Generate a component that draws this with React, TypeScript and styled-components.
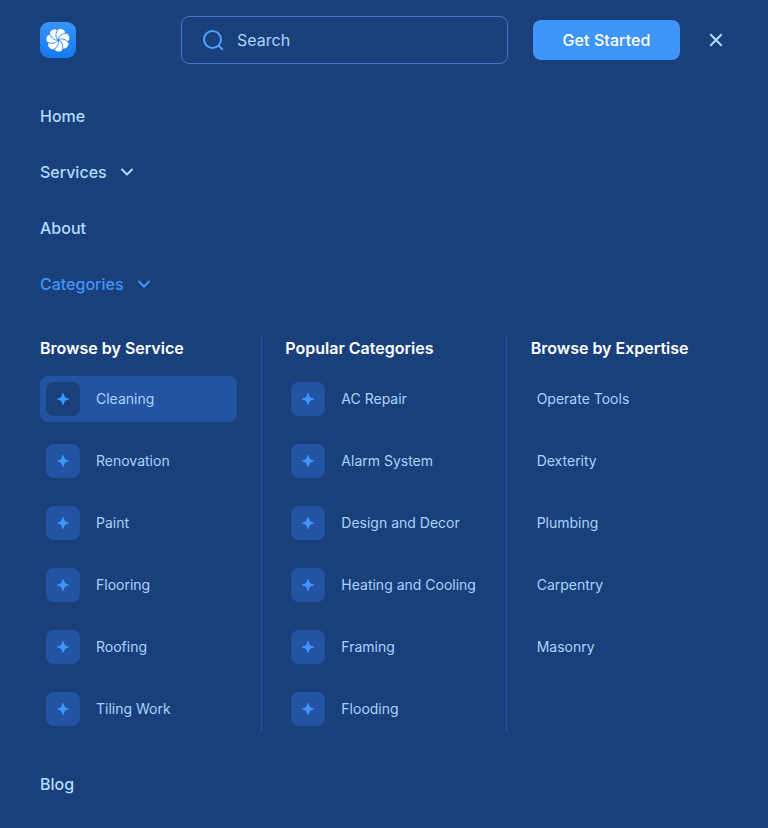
import React from "react";
import styled, { createGlobalStyle } from "styled-components";

const GlobalStyle = createGlobalStyle`
  *, *::before, *::after { box-sizing: border-box; }
  body { margin: 0; background: #1a407c; font-family: Inter, "Liberation Sans", sans-serif; }
  button { font-family: inherit; }
`;

const Page = styled.div`
  min-height: 828px;
  background: #1a407c;
  color: #b2ddff;
`;

const Header = styled.header`
  display: flex;
  align-items: center;
  height: 80px;
  padding: 0 40px;
`;

const Logo = styled.svg`
  width: 36px;
  height: 36px;
  flex: none;
`;

const SearchBox = styled.label`
  display: flex;
  align-items: center;
  gap: 12px;
  width: 327px;
  height: 48px;
  margin-left: 105px;
  padding: 0 19px;
  border: 1px solid #3a76d2;
  border-radius: 8px;
`;

const SearchIcon = styled.svg`
  width: 24px;
  height: 24px;
  flex: none;
`;

const SearchInput = styled.input`
  flex: 1;
  min-width: 0;
  padding: 0;
  border: 0;
  outline: 0;
  background: transparent;
  color: #b2ddff;
  font: 400 16px/24px Inter, sans-serif;

  &::placeholder { color: #a9d3fb; opacity: 1; }
`;

const PrimaryButton = styled.button`
  width: 147px;
  height: 40px;
  margin-left: 25px;
  padding: 0;
  border: 0;
  border-radius: 8px;
  background: #4095f9;
  color: #fff;
  font-size: 16px;
  font-weight: 500;
  letter-spacing: 0.08px;
`;

const CloseButton = styled.button`
  display: grid;
  place-items: center;
  width: 24px;
  height: 24px;
  margin-left: 24px;
  padding: 0;
  border: 0;
  background: transparent;
  color: #b2ddff;
`;

const Nav = styled.nav`
  display: flex;
  flex-direction: column;
  gap: 32px;
  padding: 24px 40px 32px;
`;

const NavLink = styled.a<{ $active?: boolean }>`
  display: flex;
  align-items: center;
  gap: 11px;
  height: 24px;
  color: ${({ $active }) => ($active ? "#4095f9" : "#b2ddff")};
  font-size: 16px;
  font-weight: 500;
  line-height: 24px;
`;

const MegaMenu = styled.div`
  display: flex;
  margin: 8px 0;
`;

const Column = styled.section`
  flex: 1 1 0;
  min-width: 0;
`;

const Divider = styled.div`
  width: 1px;
  margin: 0 23.4px 0 23.6px;
  background: #2353a3;
`;

const ColumnTitle = styled.h2`
  margin: 0 0 16px;
  color: #fff;
  font-size: 16px;
  font-weight: 600;
  line-height: 24px;
  white-space: nowrap;
`;

const List = styled.div`
  display: flex;
  flex-direction: column;
  gap: 16px;
`;

const Item = styled.a<{ $selected?: boolean }>`
  display: flex;
  align-items: center;
  gap: 16px;
  height: 46px;
  padding: 6px;
  border-radius: 8px;
  background: ${({ $selected }) => ($selected ? "#2353a3" : "transparent")};
  color: #a9d3fb;
  font-size: 14px;
  line-height: 20px;
  white-space: nowrap;
`;

const IconTile = styled.span<{ $selected?: boolean }>`
  display: grid;
  place-items: center;
  width: 34px;
  height: 34px;
  flex: none;
  border-radius: 8px;
  background: ${({ $selected }) => ($selected ? "#1a407c" : "#2353a3")};
`;

const Chevron = () => (
  <svg width="18" height="18" viewBox="0 0 18 18" fill="none" stroke="currentColor" strokeWidth="2" strokeLinecap="round" strokeLinejoin="round">
    <path d="M4 6.5l5 5 5-5" />
  </svg>
);

const Spark = () => (
  <svg width="14" height="14" viewBox="0 0 14 14" fill="#4095f9">
    <path d="M7 .8C7.6 .8 8 3.8 9 5C10.2 6 13.2 6.4 13.2 7C13.2 7.6 10.2 8 9 9C8 10.2 7.6 13.2 7 13.2C6.4 13.2 6 10.2 5 9C3.8 8 .8 7.6 .8 7C.8 6.4 3.8 6 5 5C6 3.8 6.4 .8 7 .8Z" />
  </svg>
);

const PETAL_STEP = 360 / 7;
const petals = Array.from({ length: 7 }, (_, index) => index * PETAL_STEP - 4);

const BrandLogo = () => (
  <Logo viewBox="0 0 36 36" role="img" aria-label="Logo">
    <defs>
      <linearGradient id="logoFill" x1="0" y1="0" x2="0" y2="1">
        <stop stopColor="#3795fb" />
        <stop offset="1" stopColor="#1479f1" />
      </linearGradient>
    </defs>
    <rect width="36" height="36" rx="9" fill="url(#logoFill)" />
    <circle cx="18" cy="18" r="7.5" fill="#fff" />
    {petals.map((angle) => (
      <circle
        key={angle}
        transform={`rotate(${angle + PETAL_STEP / 2} 18 18)`}
        cx="18"
        cy="10.5"
        r="4.1"
        fill="#fff"
      />
    ))}
    {petals.map((angle) => (
      <path
        key={angle}
        transform={`rotate(${angle} 18 18)`}
        d="M18 18C15.8 15.6 15.6 11.8 18 8.3"
        fill="none"
        stroke="#298bf8"
        strokeWidth=".9"
      />
    ))}
  </Logo>
);

const columns = [
  { title: "Browse by Service", icons: true, items: ["Cleaning", "Renovation", "Paint", "Flooring", "Roofing", "Tiling Work"] },
  { title: "Popular Categories", icons: true, items: ["AC Repair", "Alarm System", "Design and Decor", "Heating and Cooling", "Framing", "Flooding"] },
  { title: "Browse by Expertise", icons: false, items: ["Operate Tools", "Dexterity", "Plumbing", "Carpentry", "Masonry"] },
];

export default function App() {
  return (
    <Page>
      <GlobalStyle />
      <Header>
        <BrandLogo />
        <SearchBox>
          <SearchIcon viewBox="0 0 24 24" fill="none" stroke="#4f9ff8" strokeWidth="2" strokeLinecap="round">
            <circle cx="11.5" cy="11.5" r="8.5" />
            <path d="M17.8 17.8l3.4 3.4" />
          </SearchIcon>
          <SearchInput placeholder="Search" aria-label="Search" />
        </SearchBox>
        <PrimaryButton>Get Started</PrimaryButton>
        <CloseButton aria-label="Close menu">
          <svg width="24" height="24" viewBox="0 0 24 24" stroke="currentColor" strokeWidth="2" strokeLinecap="round">
            <path d="M6.8 6.8l10.4 10.4M17.2 6.8L6.8 17.2" />
          </svg>
        </CloseButton>
      </Header>
      <Nav>
        <NavLink>Home</NavLink>
        <NavLink>Services<Chevron /></NavLink>
        <NavLink>About</NavLink>
        <NavLink $active>Categories<Chevron /></NavLink>
        <MegaMenu>
          {columns.map((column, index) => (
            <React.Fragment key={column.title}>
              {index > 0 && <Divider />}
              <Column>
                <ColumnTitle>{column.title}</ColumnTitle>
                <List>
                  {column.items.map((item) => {
                    const selected = item === "Cleaning";
                    return (
                      <Item key={item} $selected={selected}>
                        {column.icons && <IconTile $selected={selected}><Spark /></IconTile>}
                        {item}
                      </Item>
                    );
                  })}
                </List>
              </Column>
            </React.Fragment>
          ))}
        </MegaMenu>
        <NavLink>Blog</NavLink>
      </Nav>
    </Page>
  );
}
